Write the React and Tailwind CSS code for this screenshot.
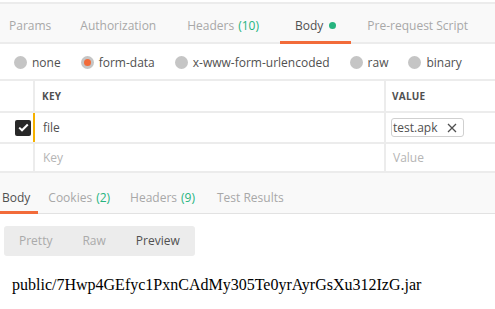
const tabs = [
  { label: "Params", cls: "pl-[9px] pr-[14px]" },
  { label: "Authorization", cls: "pl-[15px] pr-[15px]" },
  { label: "Headers", count: "(10)", cls: "pl-[16px] pr-[4px]" },
  { label: "Body", active: true, dot: true, cls: "ml-[17px] pl-[15px] pr-[15px]" },
  { label: "Pre-request Script", cls: "pl-[16px] pr-[15px]" },
]

const radios = [
  { label: "none" },
  { label: "form-data", checked: true },
  { label: "x-www-form-urlencoded" },
  { label: "raw" },
  { label: "binary" },
]

const resTabs = [
  { label: "Body", active: true },
  { label: "Cookies", count: "(2)" },
  { label: "Headers", count: "(9)" },
  { label: "Test Results" },
]

function Radio({ checked }) {
  return (
    <span className="w-[13px] h-[13px] rounded-full bg-[#c5c5c5] flex items-center justify-center">
      {checked && <span className="w-[7px] h-[7px] rounded-full bg-[#f26b3a]" />}
    </span>
  )
}

export default function App() {
  return (
    <div className="w-[495px] h-[309px] bg-white overflow-hidden pt-[2px] text-[12px] text-[#505050]" style={{ fontFamily: '"Open Sans", sans-serif' }}>

      {/* request tabs */}
      <div className="h-[42px] bg-[#f9f9f9] border-y-2 border-[#ececec] flex items-stretch">
        {tabs.map(t => (
          <div key={t.label} className={`relative flex items-center pt-[5px] ${t.cls}`}>
            <span className={t.active ? "text-[#505050]" : "text-[#a8a8a8]"}>{t.label}</span>
            {t.count && <span className="ml-1 text-[#26b47f]">{t.count}</span>}
            {t.dot && <span className="ml-[6px] w-[7px] h-[7px] rounded-full bg-[#26b47f]" />}
            {t.active && <span className="absolute left-0 right-0 -bottom-[2px] h-[3px] bg-[#f26b3a]" />}
          </div>
        ))}
      </div>

      {/* body type radios */}
      <div className="h-[37px] flex items-center pl-[14px] pt-[2px] gap-[20px] border-b-2 border-[#ececec]">
        {radios.map(r => (
          <label key={r.label} className="flex items-center gap-[5px]">
            <Radio checked={r.checked} />
            <span>{r.label}</span>
          </label>
        ))}
      </div>

      {/* form-data table */}
      <div className="grid grid-cols-[33px_2px_349px_2px_1fr]">
        <div className="h-[30px]" />
        <div className="bg-[#ececec]" />
        <div className="flex items-center pl-[7px] pt-[1px] text-[10px] font-bold text-[#505050] tracking-wide">KEY</div>
        <div className="bg-[#ececec]" />
        <div className="flex items-center pl-[6px] pt-[1px] text-[10px] font-bold text-[#505050] tracking-wide">VALUE</div>

        <div className="col-span-5 h-[2px] bg-[#ececec]" />

        <div className="h-[29px] flex items-center justify-end pr-[2px]">
          <span className="w-[16px] h-[16px] rounded-[2px] bg-[#282828] flex items-center justify-center">
            <svg width="11" height="9" viewBox="0 0 11 9" fill="none">
              <path d="M1.2 4.6 L4 7.3 L9.8 1.5" stroke="white" strokeWidth="2" />
            </svg>
          </span>
        </div>
        <div className="bg-[#f5b100]" />
        <div className="flex items-center pl-[8px] pt-[1px] text-[#505050]">file</div>
        <div className="bg-[#ececec]" />
        <div className="flex items-center pl-[5px]">
          <span className="h-[19px] flex items-center gap-[10px] pl-[1px] pr-[6px] border border-[#d0d0d0] rounded-[3px] text-[#505050]">
            test.apk
            <svg width="10" height="10" viewBox="0 0 10 10">
              <path d="M1 1 L9 9 M9 1 L1 9" stroke="#505050" strokeWidth="1.3" />
            </svg>
          </span>
        </div>

        <div className="col-span-5 h-[2px] bg-[#ececec]" />

        <div className="h-[27px]" />
        <div className="bg-[#ececec]" />
        <div className="flex items-center pl-[8px] pt-[1px] text-[#b5b5b5]">Key</div>
        <div className="bg-[#ececec]" />
        <div className="flex items-center pl-[7px] pt-[1px] text-[#b5b5b5]">Value</div>

        <div className="col-span-5 h-[2px] bg-[#ececec]" />
      </div>

      {/* response tabs */}
      <div className="h-[41px] bg-[#f9f9f9] border-b border-[#e2e2e2] flex items-stretch">
        {resTabs.map((t, i) => (
          <div key={t.label} className={`relative flex items-center pt-[9px] ${i === 0 ? "pl-[2px] pr-[8px]" : i === 3 ? "pl-[12px]" : "px-[10px]"}`}>
            <span className={t.active ? "text-[#505050]" : "text-[#a8a8a8]"}>{t.label}</span>
            {t.count && <span className="ml-1 text-[#26b47f]">{t.count}</span>}
            {t.active && <span className="absolute left-0 right-0 -bottom-[1px] h-[3px] bg-[#f26b3a]" />}
          </div>
        ))}
      </div>

      {/* view toggle */}
      <div className="pt-[12px] pl-[4px]">
        <div className="w-[191px] h-[30px] rounded-[3px] bg-[#ececec] flex items-center pl-[15px] gap-[30px]">
          <span className="text-[#aaaaaa]">Pretty</span>
          <span className="text-[#aaaaaa]">Raw</span>
          <span className="text-[#505050]">Preview</span>
        </div>
      </div>

      {/* preview */}
      <div className="pt-[17px] pl-[12px] text-[16px] text-black" style={{ fontFamily: '"Liberation Serif", serif' }}>
        public/7Hwp4GEfyc1PxnCAdMy305Te0yrAyrGsXu312IzG.jar
      </div>
    </div>
  )
}
